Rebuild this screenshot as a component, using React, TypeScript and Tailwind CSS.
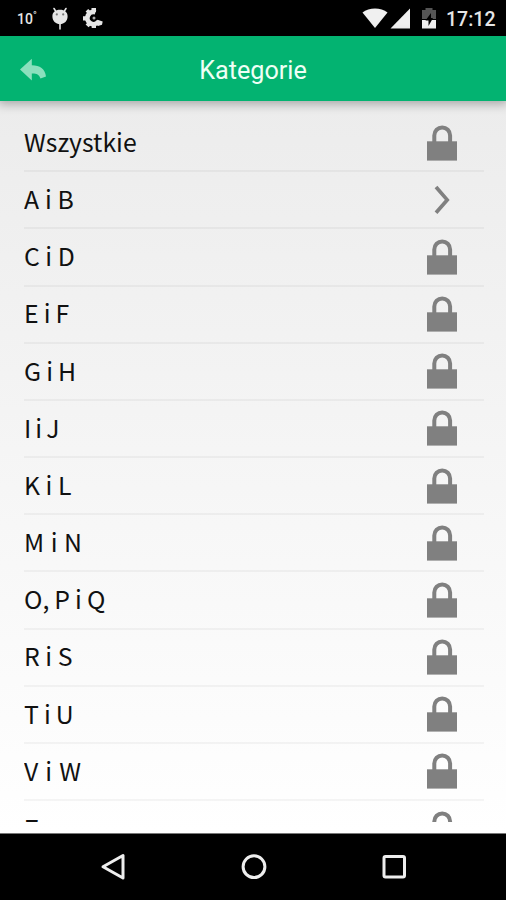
import clsx from "clsx";

type Category = {
  label: string;
  locked: boolean;
  spacing?: string;
};

const categories: Category[] = [
  { label: "Wszystkie", locked: true },
  { label: "A i B", locked: false, spacing: "[word-spacing:0.3px]" },
  { label: "C i D", locked: true },
  { label: "E i F", locked: true, spacing: "[word-spacing:-0.5px]" },
  { label: "G i H", locked: true, spacing: "[word-spacing:-0.5px]" },
  { label: "I i J", locked: true, spacing: "[word-spacing:-1.5px]" },
  { label: "K i L", locked: true },
  { label: "M i N", locked: true, spacing: "[word-spacing:1px]" },
  { label: "O, P i Q", locked: true, spacing: "[word-spacing:-0.5px]" },
  { label: "R i S", locked: true },
  { label: "T i U", locked: true, spacing: "[word-spacing:-0.5px]" },
  { label: "V i W", locked: true, spacing: "[word-spacing:1.5px]" },
  { label: "Z", locked: true },
];

const LockIcon = () => (
  <svg className="w-[30px] h-9" viewBox="0 0 30 36" fill="none">
    <path d="M7.3 17V10.4a7.9 8 0 0 1 15.8 0V17" stroke="#808080" strokeWidth="4" />
    <path d="M0 16.300h30V35.600H0z" fill="#808080" />
  </svg>
);

const ChevronIcon = () => (
  <svg className="w-[30px] h-9" viewBox="0 0 30 36" fill="none">
    <path d="M9 5 20.2 17.900 9 30.800" stroke="#808080" strokeWidth="3.7" />
  </svg>
);

const StatusBar = () => (
  <div className="flex h-9 shrink-0 items-center justify-between bg-black pl-[17px] pr-[10px] text-[#e6e6e6]">
    <div className="flex items-center">
      <span className="flex w-[34px] pt-px font-['Roboto'] text-sm font-medium leading-none">
        10<span className="-mt-px text-[10px]">°</span>
      </span>
      <svg className="h-6 w-[18px]" viewBox="0 0 18 24" fill="none">
        <path d="M3 2.500l2 3.200M15 2.500l-2 3.200M9 16v7" stroke="#e6e6e6" strokeWidth="1.6" strokeLinecap="round" />
        <path d="M9 3.800c4.600 0 7.600 2.600 7.600 6.500 0 4.500-3.200 7.900-7.600 7.900s-7.600-3.400-7.600-7.900c0-3.900 3-6.500 7.600-6.500z" fill="#e6e6e6" />
        <circle cx="5.800" cy="8.400" r="1.100" fill="#777" />
        <circle cx="12.200" cy="8.400" r="1.100" fill="#777" />
      </svg>
      <svg className="ml-3.5 h-6 w-[22px]" viewBox="0 0 22 24" fill="none">
        <path d="M12.500 6.300A6.100 6.100 0 1 0 15.500 15.500" stroke="#e6e6e6" strokeWidth="4.800" />
        <path d="M8.500 2h4.500v4H8.500zM2.600 5.500 5.200 3l2.900 2.800L5.400 8.500zM0 10.200h4.200v4.200H0zM2.600 18.600l2.900-2.900 2.900 2.800-2.800 2.800zM8.700 17.800H13V22H8.700zM14.500 13.800l5.200 1.700-.700 3.300-4 1.200-3-3z" fill="#e6e6e6" />
        <circle cx="11" cy="12" r="1.500" fill="#aaa" />
      </svg>
    </div>
    <div className="flex items-center">
      <svg className="h-6 w-[26px]" viewBox="0 0 26 24">
        <path d="M.5 6.500C7 1.200 19 1.200 25.500 6.500L13 22z" fill="#f0f0f0" />
      </svg>
      <svg className="ml-0.5 h-6 w-5" viewBox="0 0 20 24">
        <path d="M20 2.500v20H.500z" fill="#f0f0f0" />
      </svg>
      <svg className="ml-3 h-6 w-[14px]" viewBox="0 0 14 24">
        <path d="M0 4h3.500V2h7v2H14v9H0z" fill="#555" />
        <path d="M0 14h14v8.500H0z" fill="#f0f0f0" />
        <path d="M9 7 3.500 14.500H6.500V20l4.500-8H9z" fill="#000" />
      </svg>
      <span className="ml-[10px] w-[50px] whitespace-nowrap pt-[3px] font-['Roboto'] text-[19.500px] font-medium leading-none">
        17:12
      </span>
    </div>
  </div>
);

const Header = () => (
  <header className="relative z-10 grid h-[65px] shrink-0 grid-cols-[1fr_auto_1fr] items-center bg-[#03b371] px-5 shadow-[0_1px_10px_2px_rgba(0,0,0,0.3)]">
    <button className="w-[27px]" aria-label="Wstecz">
      <svg className="mt-0.5 h-6 w-[27px]" viewBox="0 0 27 24">
        <path d="M0 11.500 11.800.700V7.300C20 7.300 25 11 26 18.500L20.500 20.500C19 16 16.500 15.300 11.800 15.400V22.600z" fill="#8be0bd" />
      </svg>
    </button>
    <h1 className="pt-[5px] font-['Roboto'] text-[25.200px] leading-none text-[#effff5]">Kategorie</h1>
  </header>
);

const CategoryRow = ({ label, locked, spacing }: Category) => (
  <li className="flex h-[57.18px] shrink-0 items-center justify-between border-b-2 border-black/4 pr-[27px]">
    <span className={clsx("pb-[3.5px] font-['Noto_Sans_CJK_SC',sans-serif] text-[24.8px] leading-9 text-[#111]", spacing)}>
      {label}
    </span>
    {locked ? <LockIcon /> : <ChevronIcon />}
  </li>
);

const NavBar = () => (
  <nav className="flex h-[67px] shrink-0 items-center justify-center gap-[112px] border-t border-[#777] bg-black pl-0.5">
    <svg className="h-7 w-7" viewBox="0 0 28 28" fill="none">
      <path d="M3 13.700 23 2.500v22.500z" stroke="#eee" strokeWidth="3" strokeLinejoin="round" />
    </svg>
    <svg className="h-7 w-7" viewBox="0 0 28 28" fill="none">
      <circle cx="14" cy="13.700" r="10.900" stroke="#eee" strokeWidth="3" />
    </svg>
    <svg className="h-7 w-7" viewBox="0 0 28 28" fill="none">
      <rect x="4" y="3.500" width="20.500" height="20.500" rx="1.500" stroke="#eee" strokeWidth="3" />
    </svg>
  </nav>
);

const App = () => {
  return (
    <div className="flex h-[900px] w-[506px] flex-col overflow-hidden">
      <StatusBar />
      <Header />
      <main className="flex min-h-0 flex-1 flex-col bg-linear-to-b from-[#ececec] to-white pb-[11px] pt-[14px]">
        <ul className="ml-6 mr-[22px] flex min-h-0 flex-1 flex-col overflow-hidden">
          {categories.map((category) => (
            <CategoryRow key={category.label} {...category} />
          ))}
        </ul>
      </main>
      <NavBar />
    </div>
  );
};

export default App;
